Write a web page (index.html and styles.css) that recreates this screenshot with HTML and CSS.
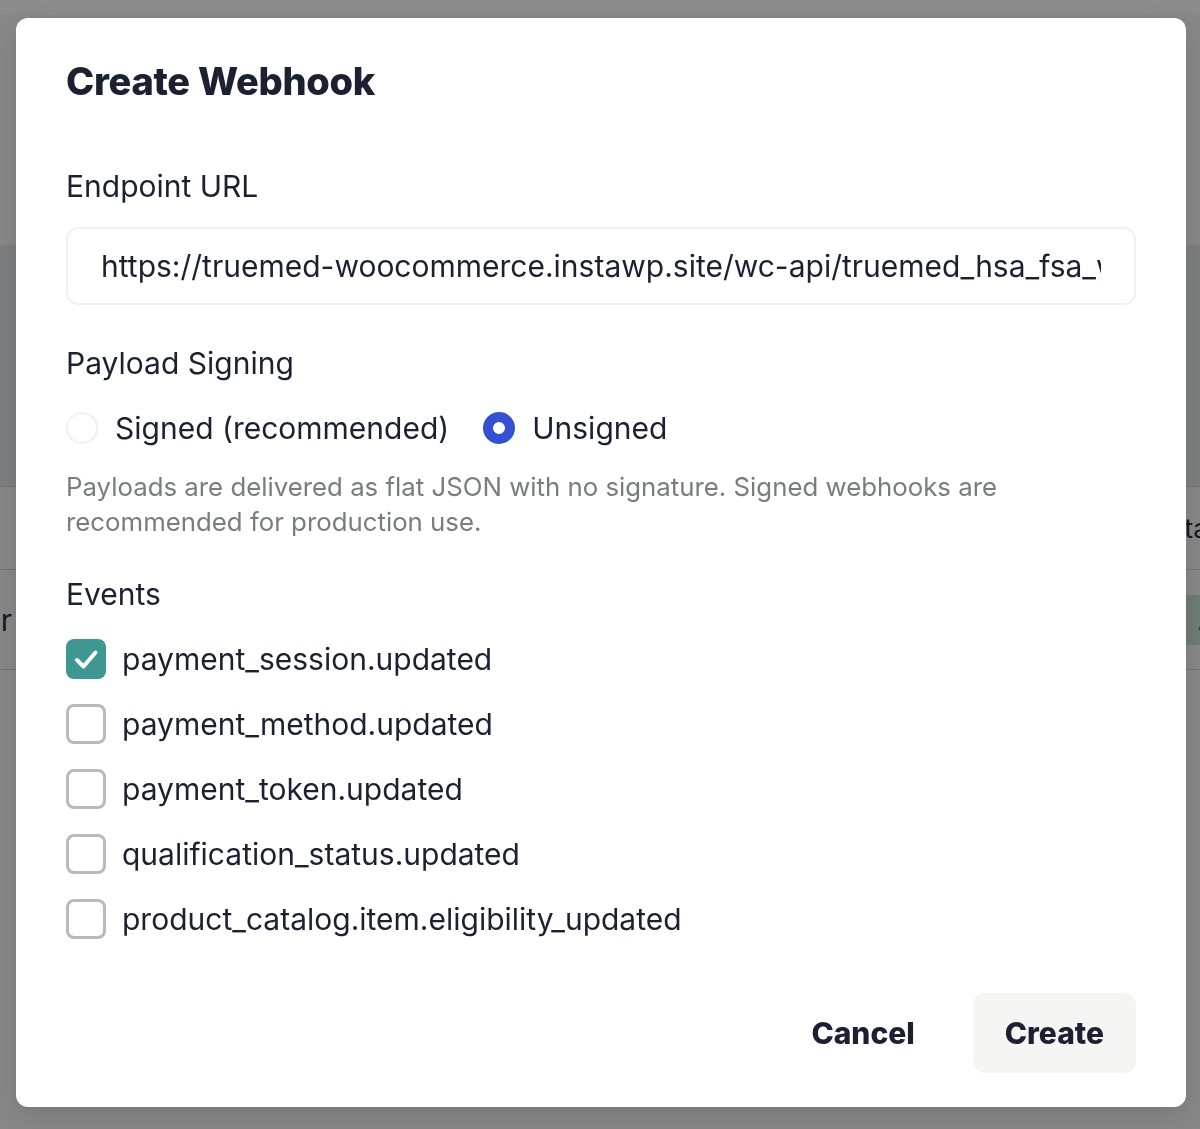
FILE: index.html
```html
<!DOCTYPE html>
<html lang="en">
<head>
<meta charset="utf-8">
<title>Create Webhook</title>
<link rel="stylesheet" href="styles.css">
</head>
<body>
<div class="page">
  <div class="topbar"></div>
  <div class="section"></div>
  <div class="panel"></div>
  <div class="row row-a">
    <div class="cell-left"></div>
    <div class="cell-right">Status</div>
  </div>
  <div class="row row-b">
    <div class="cell-left">Provider</div>
    <div class="cell-right"><span class="badge">Active</span></div>
  </div>
</div>
<div class="overlay"></div>
<div class="dialog" role="dialog" aria-labelledby="dlg-title">
  <h1 class="title" id="dlg-title">Create Webhook</h1>

  <label class="field-label" for="url">Endpoint URL</label>
  <input class="text-input" id="url" type="text" readonly value="https://truemed-woocommerce.instawp.site/wc-api/truemed_hsa_fsa_webhook">

  <div class="field-label section-label">Payload Signing</div>
  <div class="radio-row">
    <label class="radio-opt">
      <span class="radio"></span>
      <span class="opt-text">Signed (recommended)</span>
    </label>
    <label class="radio-opt">
      <span class="radio radio-on"></span>
      <span class="opt-text">Unsigned</span>
    </label>
  </div>
  <p class="help">Payloads are delivered as flat JSON with no signature. Signed webhooks are<br>recommended for production use.</p>

  <div class="field-label events-label">Events</div>
  <div class="events">
    <label class="check-row">
      <span class="check check-on">
        <svg viewBox="0 0 40 40" width="40" height="40"><path d="M11 21 L17.5 27.5 L29.5 13.5" fill="none" stroke="#fff" stroke-width="4" stroke-linecap="round" stroke-linejoin="round"/></svg>
      </span>
      <span class="opt-text">payment_session.updated</span>
    </label>
    <label class="check-row">
      <span class="check"></span>
      <span class="opt-text">payment_method.updated</span>
    </label>
    <label class="check-row">
      <span class="check"></span>
      <span class="opt-text">payment_token.updated</span>
    </label>
    <label class="check-row">
      <span class="check"></span>
      <span class="opt-text">qualification_status.updated</span>
    </label>
    <label class="check-row">
      <span class="check"></span>
      <span class="opt-text">product_catalog.item.eligibility_updated</span>
    </label>
  </div>

  <div class="actions">
    <button class="btn btn-ghost" type="button">Cancel</button>
    <button class="btn btn-soft" type="button">Create</button>
  </div>
</div>
</body>
</html>
```
FILE: styles.css
```css
* {
  box-sizing: border-box;
}

html, body {
  margin: 0;
  padding: 0;
}

body {
  width: 1200px;
  height: 1129px;
  overflow: hidden;
  font-family: Inter, "Noto Sans", "Liberation Sans", sans-serif;
  color: #1b2130;
  background: #f7f7f7;
}

/* ---------- backdrop page ---------- */
.page {
  display: flex;
  flex-direction: column;
}

.topbar {
  height: 15px;
  background: #ffffff;
}

.section {
  height: 230px;
  background: #f7f7f7;
}

.panel {
  height: 242px;
  background: #e6e8ea;
  border-bottom: 1px solid #d2d4d6;
}

.row {
  display: grid;
  grid-template-columns: 1167px 1fr;
  align-items: center;
  font-size: 27px;
  color: #2a3142;
  white-space: nowrap;
  overflow: hidden;
  border-bottom: 1px solid #d2d4d6;
}

.row-a {
  height: 83px;
}

.row-b {
  height: 100px;
}

.cell-left {
  direction: rtl;
  overflow: hidden;
  width: 12px;
  font-size: 30px;
}

.cell-right {
  overflow: hidden;
}

.badge {
  display: inline-block;
  margin-left: 19px;
  padding: 8px 12px;
  background: #cde3cf;
  color: #1f5a2c;
  font-size: 28px;
}

.overlay {
  position: fixed;
  inset: 0;
  background: rgba(0, 0, 0, 0.45);
}

/* ---------- dialog ---------- */
.dialog {
  position: absolute;
  left: 16px;
  top: 18px;
  width: 1170px;
  height: 1089px;
  background: #ffffff;
  border-radius: 12px;
  box-shadow: 0 10px 30px rgba(0, 0, 0, 0.12);
  padding: 39px 50px 34px;
  display: flex;
  flex-direction: column;
}

.title {
  margin: 0;
  font-size: 38px;
  line-height: 48px;
  font-weight: 800;
  letter-spacing: -0.3px;
  color: #1b2130;
}

.field-label {
  display: block;
  font-size: 30px;
  line-height: 40px;
  font-weight: 400;
  color: #1b2130;
  margin-top: 61px;
}

.text-input {
  display: block;
  width: 100%;
  height: 78px;
  margin-top: 21px;
  padding: 0 33px;
  border: 2px solid #eff1f6;
  border-radius: 12px;
  background: #ffffff;
  font-family: inherit;
  font-size: 30px;
  color: #1b2130;
  outline: none;
}

.section-label {
  margin-top: 38px;
}

.radio-row {
  display: flex;
  align-items: center;
  gap: 34px;
  margin-top: 25px;
  height: 40px;
}

.radio-opt {
  display: flex;
  align-items: center;
  gap: 17px;
}

.radio {
  width: 32px;
  height: 32px;
  border-radius: 50%;
  border: 2px solid #eef0f7;
  background: #ffffff;
  flex: none;
}

.radio-on {
  border: 10px solid #3451d1;
  background: #ffffff;
}

.opt-text {
  font-size: 30px;
  line-height: 40px;
  color: #1b2130;
}

.help {
  margin: 21px 0 0;
  font-size: 25.8px;
  line-height: 35px;
  color: #787e7d;
}

.events-label {
  margin-top: 35px;
}

.events {
  display: flex;
  flex-direction: column;
  gap: 25px;
  margin-top: 25px;
}

.check-row {
  display: flex;
  align-items: center;
  gap: 16px;
  height: 40px;
}

.check {
  width: 40px;
  height: 40px;
  border-radius: 8px;
  border: 3px solid #b7bbba;
  background: #ffffff;
  flex: none;
  display: flex;
}

.check-on {
  border: none;
  background: #3f9791;
}

.actions {
  margin-top: auto;
  display: flex;
  justify-content: flex-end;
  gap: 26px;
}

.btn {
  height: 80px;
  padding: 0 32px;
  border: none;
  border-radius: 12px;
  font-family: inherit;
  font-size: 30px;
  font-weight: 800;
  color: #1b2130;
  background: transparent;
}

.btn-soft {
  background: #f5f5f3;
}
```
